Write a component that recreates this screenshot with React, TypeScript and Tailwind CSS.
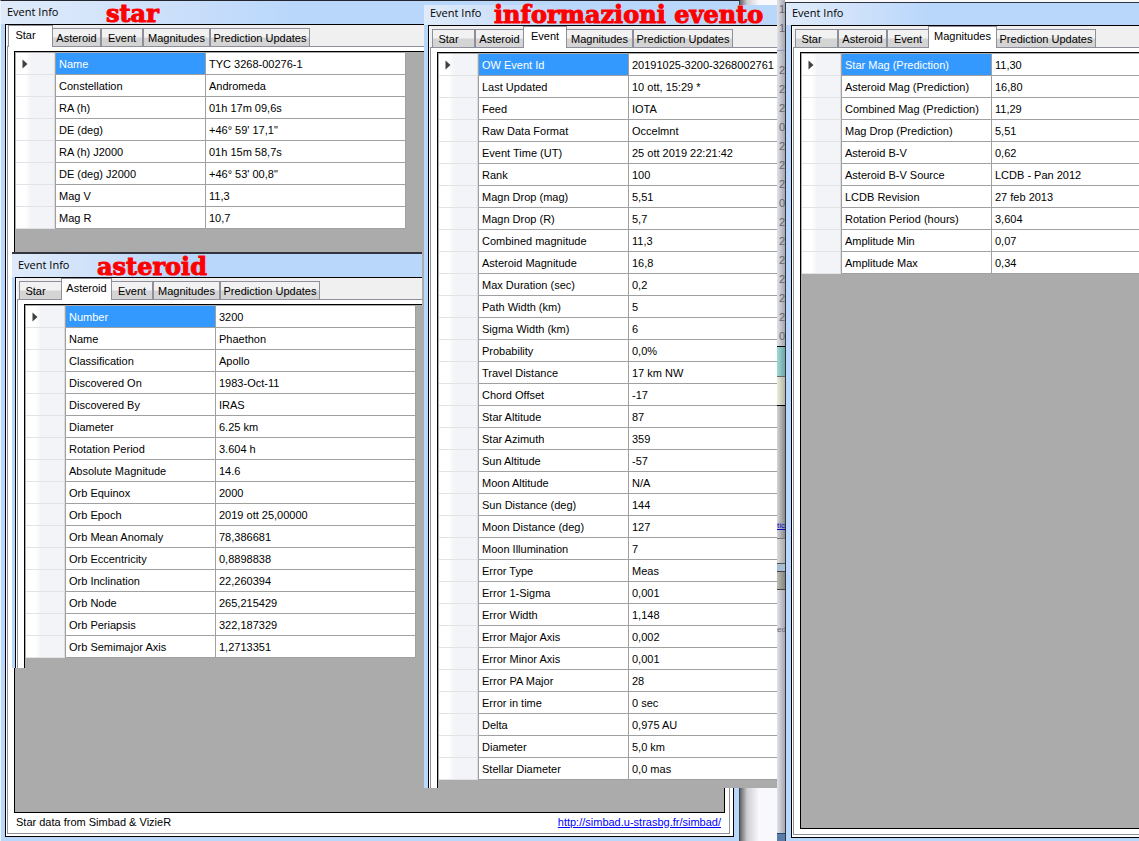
import type { ReactNode } from 'react';
import clsx from 'clsx';

type Row = [string, string];

const TABS = [
    { name: 'Star', width: 'w-[43px]' },
    { name: 'Asteroid', width: 'w-[49px]' },
    { name: 'Event', width: 'w-[42px]' },
    { name: 'Magnitudes', width: 'w-[67px]' },
    { name: 'Prediction Updates', width: 'w-[100px]' }
];

const starRows: Row[] = [
    ['Name', 'TYC 3268-00276-1'],
    ['Constellation', 'Andromeda'],
    ['RA (h)', '01h 17m 09,6s'],
    ['DE (deg)', '+46° 59\' 17,1"'],
    ['RA (h) J2000', '01h 15m 58,7s'],
    ['DE (deg) J2000', '+46° 53\' 00,8"'],
    ['Mag V', '11,3'],
    ['Mag R', '10,7']
];

const asteroidRows: Row[] = [
    ['Number', '3200'],
    ['Name', 'Phaethon'],
    ['Classification', 'Apollo'],
    ['Discovered On', '1983-Oct-11'],
    ['Discovered By', 'IRAS'],
    ['Diameter', '6.25 km'],
    ['Rotation Period', '3.604 h'],
    ['Absolute Magnitude', '14.6'],
    ['Orb Equinox', '2000'],
    ['Orb Epoch', '2019 ott 25,00000'],
    ['Orb Mean Anomaly', '78,386681'],
    ['Orb Eccentricity', '0,8898838'],
    ['Orb Inclination', '22,260394'],
    ['Orb Node', '265,215429'],
    ['Orb Periapsis', '322,187329'],
    ['Orb Semimajor Axis', '1,2713351']
];

const eventRows: Row[] = [
    ['OW Event Id', '20191025-3200-3268002761'],
    ['Last Updated', '10 ott, 15:29 *'],
    ['Feed', 'IOTA'],
    ['Raw Data Format', 'Occelmnt'],
    ['Event Time (UT)', '25 ott 2019 22:21:42'],
    ['Rank', '100'],
    ['Magn Drop (mag)', '5,51'],
    ['Magn Drop (R)', '5,7'],
    ['Combined magnitude', '11,3'],
    ['Asteroid Magnitude', '16,8'],
    ['Max Duration (sec)', '0,2'],
    ['Path Width (km)', '5'],
    ['Sigma Width (km)', '6'],
    ['Probability', '0,0%'],
    ['Travel Distance', '17 km NW'],
    ['Chord Offset', '-17'],
    ['Star Altitude', '87'],
    ['Star Azimuth', '359'],
    ['Sun Altitude', '-57'],
    ['Moon Altitude', 'N/A'],
    ['Sun Distance (deg)', '144'],
    ['Moon Distance (deg)', '127'],
    ['Moon Illumination', '7'],
    ['Error Type', 'Meas'],
    ['Error 1-Sigma', '0,001'],
    ['Error Width', '1,148'],
    ['Error Major Axis', '0,002'],
    ['Error Minor Axis', '0,001'],
    ['Error PA Major', '28'],
    ['Error in time', '0 sec'],
    ['Delta', '0,975 AU'],
    ['Diameter', '5,0 km'],
    ['Stellar Diameter', '0,0 mas']
];

const magnitudeRows: Row[] = [
    ['Star Mag (Prediction)', '11,30'],
    ['Asteroid Mag (Prediction)', '16,80'],
    ['Combined Mag (Prediction)', '11,29'],
    ['Mag Drop (Prediction)', '5,51'],
    ['Asteroid B-V', '0,62'],
    ['Asteroid B-V Source', 'LCDB - Pan 2012'],
    ['LCDB Revision', '27 feb 2013'],
    ['Rotation Period (hours)', '3,604'],
    ['Amplitude Min', '0,07'],
    ['Amplitude Max', '0,34']
];

const stripDigits = ['2', '2', '2', '0', '2', '2', '2', '0', '2', '2', '2', '2', '2', '2', '0'];

function TabBar({ active }: { active: string }) {
    return (
        <div role="tablist" className="flex h-[21px] shrink-0 items-end bg-[#f0f0f0] pl-0.5">
            {TABS.map((tab) => (
                <button
                    key={tab.name}
                    role="tab"
                    aria-selected={tab.name === active}
                    className={clsx(
                        'flex shrink-0 justify-center border border-b-0 border-[#8e8f9a] leading-4 whitespace-nowrap',
                        tab.width,
                        tab.name === active
                            ? 'relative z-10 -mx-px -mb-px box-content h-5 items-start bg-white pt-px'
                            : 'h-[18px] items-center bg-linear-to-b from-[#f2f2f2] from-45% to-[#d4d4d4] to-55%'
                    )}
                >
                    <span className={clsx(tab.name === 'Star' && 'pr-2.5')}>{tab.name}</span>
                </button>
            ))}
        </div>
    );
}

function DataGrid({ rows }: { rows: Row[] }) {
    return (
        <table className="w-[390px] table-fixed border-separate border-spacing-0">
            <colgroup>
                <col className="w-[39px]" />
                <col className="w-[150px]" />
                <col className="w-[201px]" />
            </colgroup>
            <tbody>
                {rows.map(([name, value], i) => (
                    <tr key={name} className="h-[22px]">
                        <td className="border-r border-b border-r-[#dddde0] border-b-[#e2e3e5] bg-linear-to-r from-white from-25% to-[#f3f4f7] to-40% p-0">
                            {i === 0 && (
                                <svg viewBox="0 0 6 10" className="ml-1.5 h-2.5 w-1.5">
                                    <path d="M0.5 0.5 L5.5 5 L0.5 9.5 Z" fill="#404040" />
                                </svg>
                            )}
                        </td>
                        <th
                            scope="row"
                            className={clsx(
                                'border-b border-l border-[#a0a0a0] py-0 pr-0 pl-[3px] text-left font-normal',
                                i === 0 ? 'bg-[#3399ff] text-white' : 'bg-white'
                            )}
                        >
                            {name}
                        </th>
                        <td className="border-x border-b border-[#a0a0a0] bg-white py-0 pr-0 pl-[3px] whitespace-nowrap">
                            {value}
                        </td>
                    </tr>
                ))}
            </tbody>
        </table>
    );
}

type WindowProps = {
    active: string;
    rows: Row[];
    className: string;
    titleClass: string;
    label?: string;
    labelClass?: string;
    clientClass?: string;
    pageClass?: string;
    gridClass?: string;
    footer?: ReactNode;
};

function InfoWindow({
    active,
    rows,
    className,
    titleClass,
    label,
    labelClass,
    clientClass,
    pageClass,
    gridClass,
    footer
}: WindowProps) {
    return (
        <section className={clsx('absolute flex flex-col bg-[#b9d7fb]', className)}>
            <header
                className={clsx(
                    'relative flex shrink-0 items-end bg-linear-to-r from-[#dfebfa] from-0% via-[#cfe1fa] via-20% to-[#b9d7fb] to-40% pb-1 pl-1.5',
                    titleClass
                )}
            >
                <h2 className="font-['Open_Sans',sans-serif] text-[11px] leading-4">Event Info</h2>
                {label && (
                    <span
                        className={clsx(
                            "absolute -bottom-1 font-['DejaVu_Serif',serif] text-[24px] leading-7 font-bold whitespace-nowrap text-[#ff0000] [-webkit-text-stroke:1px_#ff0000]",
                            labelClass
                        )}
                    >
                        {label}
                    </span>
                )}
            </header>
            <div className={clsx('flex min-h-0 flex-1 flex-col border-t border-l border-black bg-white pl-px', clientClass)}>
                <TabBar active={active} />
                <div
                    className={clsx(
                        'flex min-h-0 flex-1 flex-col border-t border-l border-[#8e8f9a] bg-white pt-1 pl-1.5',
                        pageClass
                    )}
                >
                    <div
                        className={clsx(
                            'min-h-0 flex-1 overflow-hidden border-t border-l border-black bg-[#ababab] pt-px pl-px',
                            gridClass
                        )}
                    >
                        <DataGrid rows={rows} />
                    </div>
                    {footer}
                </div>
            </div>
        </section>
    );
}

// Sliver of the main application window that shows between the dialogs
function BackgroundStrip() {
    return (
        <div className="absolute inset-y-0 left-[777px] flex w-2 flex-col bg-linear-to-r from-[#e2e2ea] to-[#a6a6ae] text-[11px] leading-[19px] text-[#66666e]">
            <div className="h-[51px] shrink-0 border-b border-[#8799bd] pl-0.5">
                <div>1</div>
                <div>1</div>
            </div>
            <div className="h-[295px] shrink-0 pt-2.5 pl-0.5">
                {stripDigits.map((digit, i) => (
                    <div key={i}>{digit}</div>
                ))}
            </div>
            <div className="h-[31px] shrink-0 border-t border-b border-t-black border-b-[#666666] bg-linear-to-r from-[#9edbd9] to-[#70a5a5]" />
            <div className="h-[29px] shrink-0 border-b border-black bg-linear-to-r from-[#eeeedc] to-[#b5b5a5]" />
            <div className="h-[133px] shrink-0 border-b border-[#777777] bg-linear-to-r from-[#d5d5d5] to-[#8a8a8a] pt-[110px]">
                <a href="#" className="block text-[8px] text-[#0000cc] underline">
                    tic
                </a>
            </div>
            <div className="h-[25px] shrink-0 border-b border-[#555555] bg-linear-to-r from-[#dddddd] to-[#aaaaaa]" />
            <div className="h-2 shrink-0 border-b border-[#444444] bg-[#a5bfd5]" />
            <div className="h-[18px] shrink-0 border-b border-[#444444] bg-linear-to-r from-[#bdbdb5] to-[#85857d]" />
            <div className="flex-1 pt-[30px] text-[8px]">ed</div>
            <div className="h-2 shrink-0 border-t border-[#2d466b] bg-[#5a7ca8]" />
        </div>
    );
}

export default function App() {
    return (
        <main className="relative min-h-screen overflow-hidden bg-[#f8f8fd] font-['Liberation_Sans',Arial,sans-serif] text-[11px] leading-4 text-black">
            <div className="absolute inset-y-0 left-[739px] w-5 bg-linear-to-r from-[#55555a] via-[#cdcdd2] via-40% to-[#f8f8fd]" />
            <BackgroundStrip />

            <InfoWindow
                active="Star"
                rows={starRows}
                className="inset-y-0 left-0 w-[740px] border-t border-r border-l border-t-[#25252d] border-r-[#404850] border-l-[#eef5ff] pr-[5px] pb-1"
                titleClass="h-[23px]"
                label="star"
                labelClass="left-[105px]"
                clientClass="ml-1 border-r border-b pr-[3px] pb-0.5"
                pageClass="border-r border-b pr-1"
                gridClass="border-r border-b"
                footer={
                    <footer className="flex h-5 shrink-0 items-center justify-between pr-1 pb-0.5 pl-0.5">
                        <span>Star data from Simbad &amp; VizieR</span>
                        <a href="http://simbad.u-strasbg.fr/simbad/" className="text-[#0000ff] underline">
                            http://simbad.u-strasbg.fr/simbad/
                        </a>
                    </footer>
                }
            />

            <InfoWindow
                active="Asteroid"
                rows={asteroidRows}
                className="top-[252px] left-[12px] h-[416px] w-[410px] border-t-2 border-[#34343e]"
                titleClass="h-[23px]"
                label="asteroid"
                labelClass="left-[85px]"
                clientClass="ml-[3px]"
            />

            <InfoWindow
                active="Event"
                rows={eventRows}
                className="top-[5px] left-[424px] h-[783px] w-[353px]"
                titleClass="h-5"
                label="informazioni evento"
                labelClass="left-[70px]"
                clientClass="ml-1"
            />

            <InfoWindow
                active="Magnitudes"
                rows={magnitudeRows}
                className="top-[2px] right-0 bottom-0 left-[785px] border-t border-l border-[#30353c] pb-[3px]"
                titleClass="h-[22px]"
                clientClass="ml-[5px] border-b pb-0.5"
                pageClass="border-b pb-[5px]"
                gridClass="border-b"
            />
        </main>
    );
}
